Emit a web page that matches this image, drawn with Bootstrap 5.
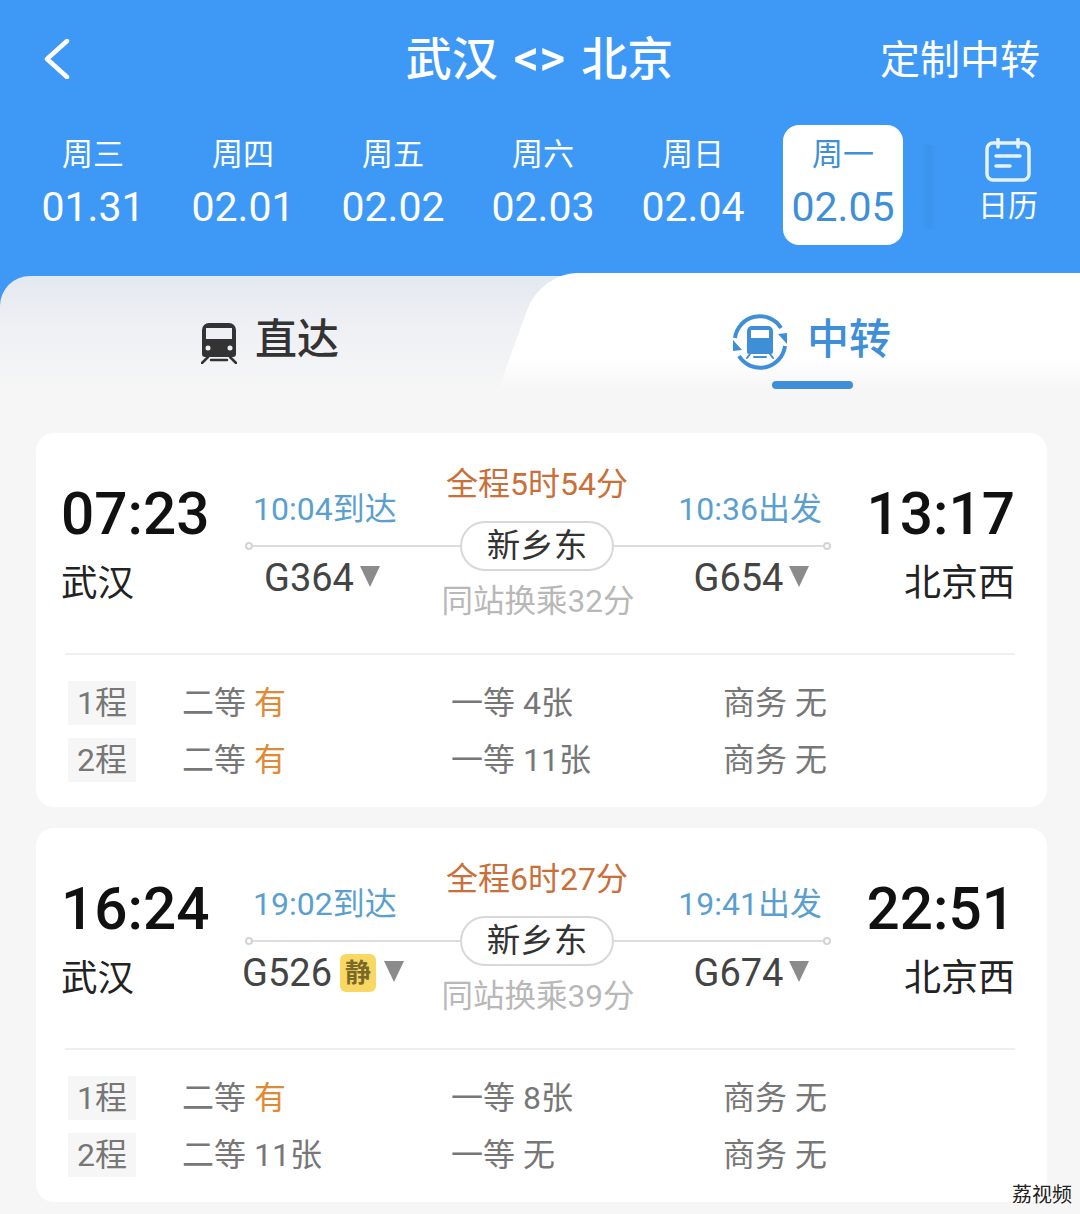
<!DOCTYPE html>
<html lang="zh-CN">
<head>
    <meta charset="UTF-8">
    <meta name="viewport" content="width=device-width, initial-scale=1.0">
    <title>武汉 北京 中转</title>
    <link href="https://cdn.jsdelivr.net/npm/bootstrap@5.3.0/dist/css/bootstrap.min.css" rel="stylesheet">
    <style>
        body {
            width: 1080px;
            height: 1214px;
            overflow: hidden;
            position: relative;
            background: #f6f6f6;
            font-family: Roboto, "Noto Sans CJK SC", sans-serif;
        }
        .blue-top { background: #3d99f5; color: #fff; }
        .title-row { height: 125px; padding: 0 40px 7px 43px; }
        .title-side { width: 200px; }
        .route-title { font-size: 46px; font-weight: 500; margin-left: -4px; }
        .route-title span { font-size: 50px; line-height: 1; margin: 0 16px; }
        .custom-link { font-size: 40px; white-space: nowrap; text-align: right; margin-top: 3px; }

        .date-strip { padding-left: 18px; height: 151px; align-items: flex-start; }
        .date-cell { width: 150px; display: flex; justify-content: center; }
        .date-box { width: 120px; height: 120px; text-align: center; padding-top: 9px; border-radius: 16px; }
        .date-box.is-on { background: #fff; color: #3f8ed8; }
        .week-name { font-size: 31px; line-height: 42px; }
        .date-num { font-size: 41px; line-height: 62px; }
        .cal-cell { width: 162px; padding-left: 18px; text-align: center; padding-top: 13px; position: relative; }
        .cal-cell::before {
            content: "";
            position: absolute;
            left: 4px;
            top: 20px;
            width: 14px;
            height: 84px;
            background: linear-gradient(90deg, #3d99f5, #3a93ec, #3d99f5);
        }
        .cal-text { font-size: 30px; line-height: 40px; margin-top: 4px; }

        .tab-strip {
            height: 157px;
            background: linear-gradient(#e4e8f0 0, #eef0f4 50px, #f6f6f6 115px);
            border-radius: 30px 30px 0 0;
        }
        .tab-item { width: 50%; height: 100%; padding-top: 31px; align-items: flex-start; justify-content: center; gap: 18px; position: relative; }
        .tab-text { font-size: 42px; line-height: 66px; font-weight: 500; position: relative; }
        .tab-direct { color: #333; padding-left: 24px; width: 516px; }
        .tab-transfer { color: #3f8ed8; width: 564px; margin-top: -3px; padding-top: 31px; padding-left: 26px; gap: 18px; }
        .tab-transfer .tab-text { margin-top: 3px; }
        .tab-transfer::before {
            content: "";
            position: absolute;
            top: 0;
            bottom: 40px;
            left: 0;
            right: 0;
            background: linear-gradient(#fff 72%, #f6f6f6);
            border-radius: 36px 40px 0 0;
            transform: skewX(-20deg);
            transform-origin: bottom left;
            margin-left: -18px;
        }
        .tab-transfer::after {
            content: "";
            position: absolute;
            top: 0;
            bottom: 40px;
            right: 0;
            width: 120px;
            background: linear-gradient(#fff 72%, #f6f6f6);
            border-radius: 0 40px 0 0;
        }
        .tab-icon { position: relative; flex: none; }
        .icon-direct { margin-top: 15px; }
        .icon-transfer { margin-top: 9px; }
        .tab-mark {
            position: absolute;
            z-index: 1;
            left: 256px;
            top: 108px;
            width: 81px;
            height: 8px;
            border-radius: 4px;
            background: #3f8ed8;
        }

        .trip-list { padding: 0 33px 0 36px; gap: 21px; }
        .trip-card { background: #fff; border-radius: 18px; height: 374px; padding: 0 32px 0 26px; }
        .trip-main { height: 222px; border-bottom: 2px solid #f0f0f0; margin-left: 3px; }
        .end-col { width: 186px; flex: none; padding-top: 45px; margin-left: -4px; }
        .end-col.at-right { width: 186px; margin-left: 0; text-align: right; }
        .clock { font-size: 58.5px; line-height: 72px; font-weight: 500; color: #111; }
        .city { font-size: 36.5px; line-height: 67px; color: #222; }
        .at-right .city { font-size: 37px; }

        .leg-col { width: 213px; flex: none; padding-top: 56px; }
        .leg-col.at-right { width: auto; flex: 1 1 0; min-width: 0; }
        .leg-time { font-size: 32px; line-height: 40px; color: #5a9fd0; padding-left: 6px; }
        .leg-col.at-right .leg-time { text-align: right; padding-left: 0; padding-right: 7px; }
        .leg-line { height: 2px; background: #dcdcdc; margin-top: 16px; position: relative; }
        .leg-line::before {
            content: "";
            position: absolute;
            left: -2px;
            top: -3px;
            width: 8px;
            height: 8px;
            border-radius: 50%;
            background: #fff;
            border: 2px solid #d4d4d4;
        }
        .leg-col.at-right .leg-line::before { left: auto; right: -2px; }
        .train-no { font-size: 38px; line-height: 44px; color: #444; margin-top: 9px; gap: 6px; justify-content: center; align-items: center; padding-right: 63px; }
        .train-no.has-tag { gap: 8px; padding-right: 61px; }
        .leg-col.at-right .train-no { padding-left: 60px; padding-right: 0; }
        .quiet-tag {
            flex: none;
            width: 36px;
            height: 38px;
            border-radius: 6px;
            background: #f8d862;
            color: #7a6a2a;
            font-size: 26px;
            line-height: 38px;
            text-align: center;
            font-weight: 700;
        }
        .drop-mark { flex: none; width: 0; height: 0; border-left: 10px solid transparent; border-right: 10px solid transparent; border-top: 21px solid #8b8b8b; margin-top: -4px; }

        .stop-col { width: 154px; flex: none; padding-top: 28px; }
        .total-time { font-size: 32px; line-height: 46px; color: #c9703a; white-space: nowrap; }
        .stop-pill {
            width: 154px;
            height: 50px;
            border: 2px solid #d8d8d8;
            border-radius: 25px;
            font-size: 33.5px;
            line-height: 46px;
            text-align: center;
            color: #333;
            margin-top: 14px;
        }
        .wait-time { font-size: 31.5px; line-height: 44px; color: #b8b8b8; white-space: nowrap; margin-top: 9px; padding-left: 2px; }

        .seat-grid { padding: 26px 0 0 6px; row-gap: 13px; display: grid; grid-template-columns: 114px 269px 272px auto; font-size: 32px; line-height: 44px; color: #777; align-items: center; }
        .leg-tag { width: 68px; background: #f6f6f6; text-align: center; }
        .seat-hot { color: #e08a36; }

        .water-mark {
            position: absolute;
            right: 8px;
            bottom: 8px;
            font-size: 20px;
            line-height: 22px;
            color: #222;
            text-shadow: 0 0 2px #fff, 0 0 2px #fff;
        }
    </style>
</head>
<body>
    <div class="blue-top">
        <div class="title-row d-flex align-items-center justify-content-between">
            <div class="title-side">
                <svg width="28" height="40" viewBox="0 0 28 40" class="d-block"><path d="M24 2 L4 20 L24 38" fill="none" stroke="#fff" stroke-width="4.5" stroke-linecap="round" stroke-linejoin="round"/></svg>
            </div>
            <div class="route-title text-center text-nowrap">武汉<span>&lt;&gt;</span>北京</div>
            <div class="title-side custom-link">定制中转</div>
        </div>

        <div class="date-strip d-flex">
            <div class="date-cell"><div class="date-box"><div class="week-name">周三</div><div class="date-num">01.31</div></div></div>
            <div class="date-cell"><div class="date-box"><div class="week-name">周四</div><div class="date-num">02.01</div></div></div>
            <div class="date-cell"><div class="date-box"><div class="week-name">周五</div><div class="date-num">02.02</div></div></div>
            <div class="date-cell"><div class="date-box"><div class="week-name">周六</div><div class="date-num">02.03</div></div></div>
            <div class="date-cell"><div class="date-box"><div class="week-name">周日</div><div class="date-num">02.04</div></div></div>
            <div class="date-cell"><div class="date-box is-on"><div class="week-name">周一</div><div class="date-num">02.05</div></div></div>
            <div class="cal-cell">
                <svg width="46" height="44" viewBox="0 0 46 44" class="d-block mx-auto">
                    <rect x="2" y="5" width="42" height="37" rx="6" fill="none" stroke="#e6f2ff" stroke-width="3.5"/>
                    <path d="M13 1v8M33 1v8" stroke="#e6f2ff" stroke-width="3.5" stroke-linecap="round"/>
                    <path d="M11 18h24M11 28h14" stroke="#e6f2ff" stroke-width="3.5" stroke-linecap="round"/>
                </svg>
                <div class="cal-text">日历</div>
            </div>
        </div>

        <div class="tab-strip d-flex">
            <div class="tab-item tab-direct d-flex">
                <svg class="tab-icon icon-direct" width="36" height="42" viewBox="0 0 36 42">
                    <path d="M8 1h20a7 7 0 0 1 7 7v24a3 3 0 0 1-3 3H4a3 3 0 0 1-3-3V8a7 7 0 0 1 7-7z" fill="#333"/>
                    <rect x="5" y="6" width="26" height="11" fill="#eef0f4"/>
                    <circle cx="7" cy="26" r="2.5" fill="#eef0f4"/>
                    <circle cx="29" cy="26" r="2.5" fill="#eef0f4"/>
                    <path d="M7 35 L1 41 M29 35 L35 41 M10 38h16" stroke="#333" stroke-width="2.5" stroke-linecap="round"/>
                </svg>
                <div class="tab-text">直达</div>
            </div>
            <div class="tab-item tab-transfer d-flex">
                <svg class="tab-icon icon-transfer" width="58" height="58" viewBox="0 0 58 58">
                    <path d="M4 25A25 25 0 0 1 50 15" fill="none" stroke="#3f8ed8" stroke-width="4"/>
                    <path d="M54 33A25 25 0 0 1 8 43" fill="none" stroke="#3f8ed8" stroke-width="4"/>
                    <path d="M47 21l9-1v11zM11 37l-9 1V27z" fill="#3f8ed8"/>
                    <path d="M21 13h16a5 5 0 0 1 5 5v21a2 2 0 0 1-2 2H18a2 2 0 0 1-2-2V18a5 5 0 0 1 5-5z" fill="#3f8ed8"/>
                    <rect x="20" y="17" width="18" height="8" fill="#fff"/>
                    <path d="M19 41l-3 4M39 41l3 4M23 44h12" stroke="#3f8ed8" stroke-width="2" stroke-linecap="round"/>
                </svg>
                <div class="tab-text">中转</div>
                <div class="tab-mark"></div>
            </div>
        </div>
    </div>

    <div class="trip-list d-flex flex-column">
        <div class="trip-card">
            <div class="trip-main d-flex">
                <div class="end-col"><div class="clock">07:23</div><div class="city">武汉</div></div>
                <div class="leg-col">
                    <div class="leg-time">10:04到达</div>
                    <div class="leg-line"></div>
                    <div class="train-no d-flex"><span>G364</span><i class="drop-mark"></i></div>
                </div>
                <div class="stop-col d-flex flex-column align-items-center">
                    <div class="total-time">全程5时54分</div>
                    <div class="stop-pill">新乡东</div>
                    <div class="wait-time">同站换乘32分</div>
                </div>
                <div class="leg-col at-right">
                    <div class="leg-time">10:36出发</div>
                    <div class="leg-line"></div>
                    <div class="train-no d-flex"><span>G654</span><i class="drop-mark"></i></div>
                </div>
                <div class="end-col at-right"><div class="clock">13:17</div><div class="city">北京西</div></div>
            </div>
            <div class="seat-grid">
                <div class="leg-tag">1程</div><div>二等 <span class="seat-hot">有</span></div><div>一等 4张</div><div>商务 无</div>
                <div class="leg-tag">2程</div><div>二等 <span class="seat-hot">有</span></div><div>一等 11张</div><div>商务 无</div>
            </div>
        </div>

        <div class="trip-card">
            <div class="trip-main d-flex">
                <div class="end-col"><div class="clock">16:24</div><div class="city">武汉</div></div>
                <div class="leg-col">
                    <div class="leg-time">19:02到达</div>
                    <div class="leg-line"></div>
                    <div class="train-no has-tag d-flex"><span>G526</span><span class="quiet-tag">静</span><i class="drop-mark"></i></div>
                </div>
                <div class="stop-col d-flex flex-column align-items-center">
                    <div class="total-time">全程6时27分</div>
                    <div class="stop-pill">新乡东</div>
                    <div class="wait-time">同站换乘39分</div>
                </div>
                <div class="leg-col at-right">
                    <div class="leg-time">19:41出发</div>
                    <div class="leg-line"></div>
                    <div class="train-no d-flex"><span>G674</span><i class="drop-mark"></i></div>
                </div>
                <div class="end-col at-right"><div class="clock">22:51</div><div class="city">北京西</div></div>
            </div>
            <div class="seat-grid">
                <div class="leg-tag">1程</div><div>二等 <span class="seat-hot">有</span></div><div>一等 8张</div><div>商务 无</div>
                <div class="leg-tag">2程</div><div>二等 11张</div><div>一等 无</div><div>商务 无</div>
            </div>
        </div>
    </div>

    <div class="water-mark">荔视频</div>

    <script src="https://cdn.jsdelivr.net/npm/bootstrap@5.3.0/dist/js/bootstrap.bundle.min.js"></script>
</body>
</html>
